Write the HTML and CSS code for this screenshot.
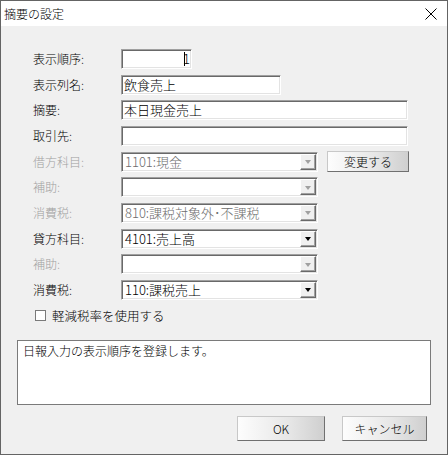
FILE: index.html
```html
<!DOCTYPE html>
<html lang="ja">
<head>
    <meta charset="UTF-8">
    <title>摘要の設定</title>
    <link rel="stylesheet" href="styles.css">
</head>
<body>
    <div class="window">
        <div class="titlebar">
            <span class="title">摘要の設定</span>
            <svg class="close" width="12" height="12" viewBox="0 0 12 12">
                <path d="M0.5 0.5 L11.5 11.5 M11.5 0.5 L0.5 11.5" stroke="#000" stroke-width="1" fill="none"/>
            </svg>
        </div>

        <div class="form">
            <label>表示順序:</label>
            <div class="cell"><div class="field num"><span class="caret"></span>1</div></div>

            <label>表示列名:</label>
            <div class="cell"><div class="field name">飲食売上</div></div>

            <label>摘要:</label>
            <div class="cell"><div class="field wide">本日現金売上</div></div>

            <label>取引先:</label>
            <div class="cell"><div class="field wide"></div></div>

            <label class="off">借方科目:</label>
            <div class="cell">
                <div class="field select disabled"><span class="val">1101:現金</span><span class="drop"><i></i></span></div>
                <button class="btn change">変更する</button>
            </div>

            <label class="off">補助:</label>
            <div class="cell"><div class="field select disabled"><span class="val"></span><span class="drop"><i></i></span></div></div>

            <label class="off">消費税:</label>
            <div class="cell"><div class="field select disabled"><span class="val">810:課税対象外･不課税</span><span class="drop"><i></i></span></div></div>

            <label>貸方科目:</label>
            <div class="cell"><div class="field select"><span class="val">4101:売上高</span><span class="drop"><i></i></span></div></div>

            <label class="off">補助:</label>
            <div class="cell"><div class="field select disabled"><span class="val"></span><span class="drop"><i></i></span></div></div>

            <label>消費税:</label>
            <div class="cell"><div class="field select"><span class="val">110:課税売上</span><span class="drop"><i></i></span></div></div>
        </div>

        <div class="check-row">
            <span class="checkbox"></span>
            <span>軽減税率を使用する</span>
        </div>

        <div class="message">日報入力の表示順序を登録します。</div>

        <div class="actions">
            <button class="btn ok">OK</button>
            <button class="btn cancel">キャンセル</button>
        </div>
    </div>
</body>
</html>
```

FILE: styles.css
```css
body {
    margin: 0;
    font-family: "Noto Sans CJK JP", "Noto Sans", sans-serif;
    font-size: 12px;
    font-weight: 300;
    color: #000;
}

.window {
    width: 448px;
    height: 455px;
    box-sizing: border-box;
    border: 1px solid #646464;
    background: #f0f0f0;
    display: flex;
    flex-direction: column;
}

.titlebar {
    height: 25px;
    flex: none;
    background: #fff;
    display: flex;
    align-items: center;
    justify-content: space-between;
    padding: 0 10px 0 3px;
}

.title {
    font-size: 12px;
    line-height: 16px;
}

.close {
    display: block;
    margin-top: 1px;
}

.form {
    display: grid;
    grid-template-columns: 88px auto;
    grid-auto-rows: 20px;
    row-gap: 5.67px;
    padding: 23px 0 0 32px;
}

.form label {
    display: flex;
    align-items: center;
    line-height: 16px;
}

.form label.off {
    color: #a0a0a0;
}

.cell {
    display: flex;
    align-items: center;
    gap: 9px;
}

.field {
    height: 20px;
    box-sizing: border-box;
    border: 1px solid;
    border-color: #a0a0a0 #fff #fff #a0a0a0;
    padding: 1px 2px;
    box-shadow: inset 1px 1px #696969, inset -1px -1px #e3e3e3;
    background: #fff;
    font-size: 13px;
    line-height: 16px;
    white-space: nowrap;
    overflow: hidden;
}

.num {
    width: 71px;
    display: flex;
    justify-content: flex-end;
    align-items: center;
    padding-right: 1px;
}

.caret {
    width: 1px;
    height: 14px;
    background: #000;
    margin-right: -2px;
}

.name {
    width: 160px;
}

.wide {
    width: 287px;
}

.select {
    width: 197px;
    display: flex;
    padding: 1px;
}

.select .val {
    flex: 1;
    padding-left: 2px;
}

.select.disabled .val {
    color: #6d6d6d;
}

.drop {
    width: 16px;
    box-sizing: border-box;
    border: 1px solid;
    border-color: #fff #696969 #696969 #fff;
    box-shadow: inset -1px -1px #a0a0a0;
    background: #f0f0f0;
    display: flex;
    align-items: center;
    justify-content: center;
}

.drop i {
    width: 0;
    height: 0;
    border-top: 4px solid #000;
    border-left: 3.5px solid transparent;
    border-right: 3.5px solid transparent;
    margin-top: 1px;
}

.disabled .drop i {
    border-top-color: #a0a0a0;
}

.btn {
    font-family: inherit;
    font-size: 12px;
    font-weight: 300;
    color: #000;
    height: 21px;
    box-sizing: border-box;
    padding: 0;
    border: 1px solid;
    border-color: #c8c8c8 #707070 #707070 #c8c8c8;
    background: linear-gradient(to right, #fdfdfd, #e6e6e6 60%, #cfcfcf);
}

.change {
    width: 82px;
}

.check-row {
    display: flex;
    align-items: center;
    gap: 6px;
    margin: 8px 0 0 34px;
    font-size: 12.5px;
    line-height: 16px;
}

.checkbox {
    width: 11px;
    height: 11px;
    box-sizing: border-box;
    border: 1px solid #7a7a7a;
    background: #fff;
}

.message {
    height: 65px;
    box-sizing: border-box;
    margin: 16px 16px 0 16px;
    border: 1px solid #7a7a7a;
    background: #fff;
    padding: 2px 5px;
    line-height: 16px;
}

.actions {
    display: flex;
    justify-content: flex-end;
    gap: 17px;
    margin: 11px 20px 0 0;
}

.actions .btn {
    height: 25px;
}

.ok {
    width: 88px;
}

.cancel {
    width: 85px;
}
```
